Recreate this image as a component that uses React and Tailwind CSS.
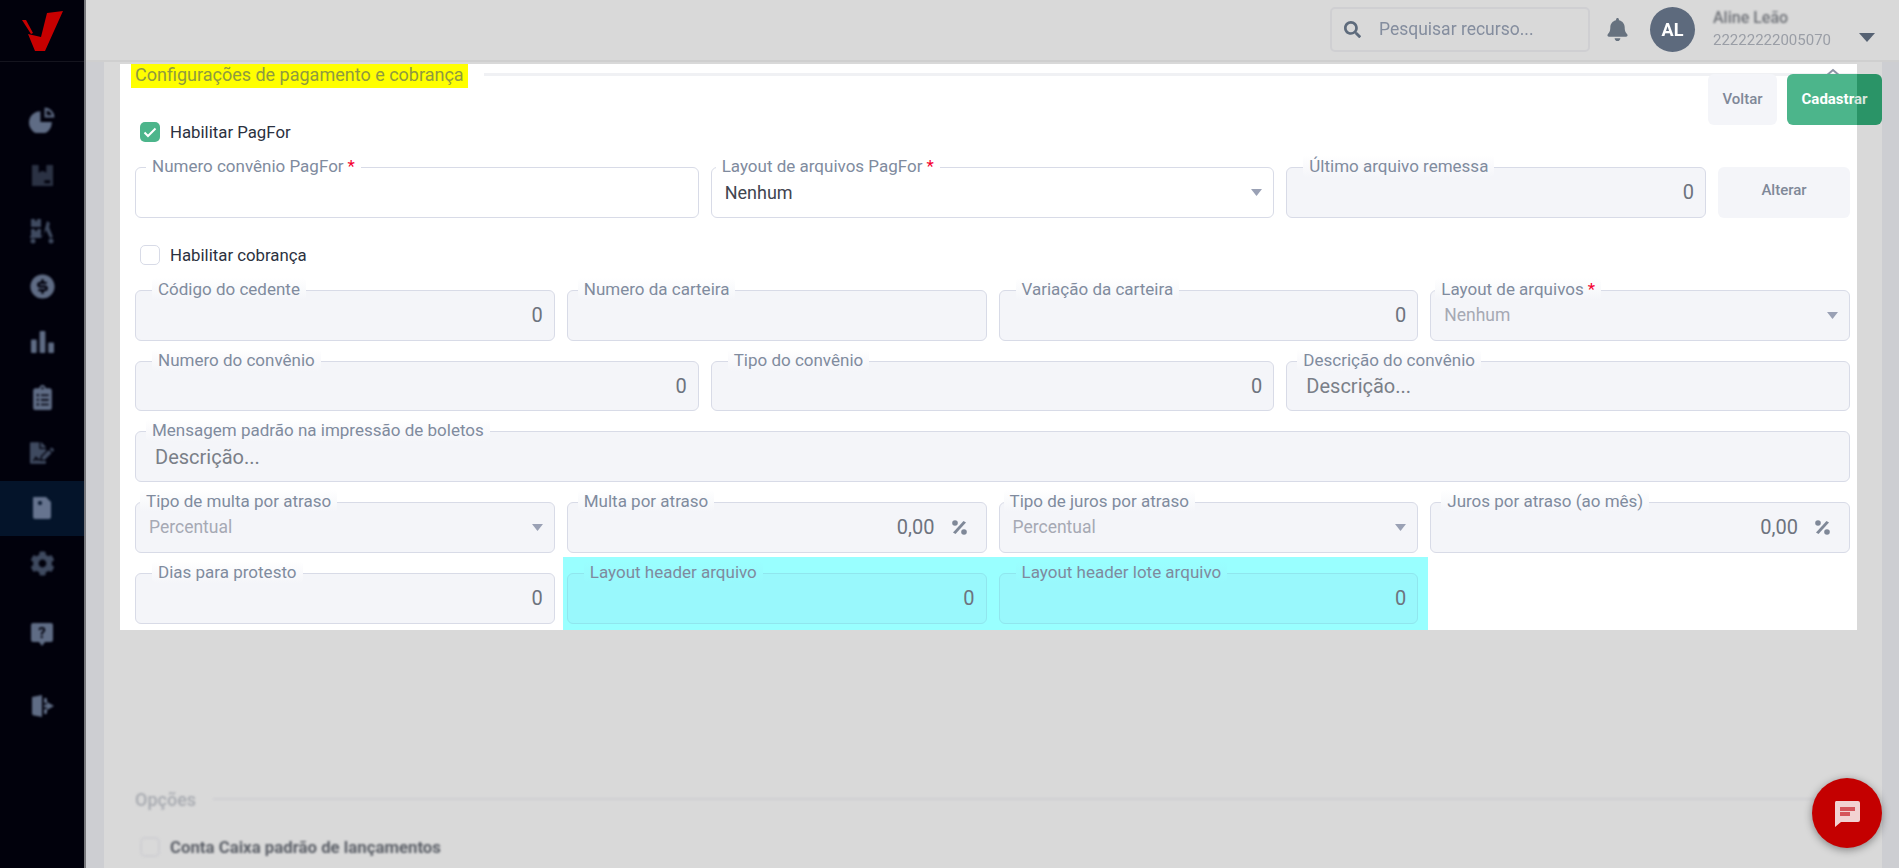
import { FaBell, FaClipboardList, FaCog, FaFileSignature, FaSearch } from 'react-icons/fa';
import { RiMoneyDollarCircleFill } from 'react-icons/ri';

function PieIcon({ size }) {
  return (
    <svg width={size} height={size} viewBox="0 0 26 26" fill="currentColor">
      <path d="M11 5v10.500h11A11 11 0 1 1 11 5z" />
      <path d="M15 1.500a9.500 9.500 0 0 1 9.500 9.500H15zM17 4v5h5.200A7.500 7.500 0 0 0 17 4z" fillRule="evenodd" />
    </svg>
  );
}

function BoxIcon({ size }) {
  return (
    <svg width={size} height={size} viewBox="0 0 24 24" fill="currentColor">
      <path d="M1 1h7v8l4-2 4 2V1h7v22H1zM14 17v3h6v-3z" fillRule="evenodd" />
    </svg>
  );
}

function DollyIcon({ size }) {
  return (
    <svg width={size} height={size} viewBox="0 0 26 26" fill="currentColor">
      <path d="M2 1h4v2h2V1h4v8H2zM2 11h4v2h2v-2h4v8H2zM18 3l3 2-1 4 4 10-3 1-4-8-5 8H1v-2l13 0z" />
      <circle cx="4" cy="23" r="2.500" />
      <circle cx="22" cy="23" r="2.500" />
    </svg>
  );
}

function BarsIcon({ size }) {
  return (
    <svg width={size} height={size} viewBox="0 0 24 24" fill="currentColor">
      <rect x="0" y="10" width="6" height="14" rx="1" />
      <rect x="9" y="1" width="6" height="23" rx="1" />
      <rect x="18" y="13" width="6" height="11" rx="1" />
    </svg>
  );
}

function BookIcon({ size }) {
  return (
    <svg width={size} height={size} viewBox="0 0 24 24" fill="currentColor">
      <path d="M4 1h12l5 5v15a2 2 0 0 1-2 2H5a2 2 0 0 1-2-2V2a1 1 0 0 1 1-1zm6 4a2 2 0 1 0 0 4 2 2 0 0 0 0-4z" fillRule="evenodd" />
    </svg>
  );
}

function HelpIcon({ size }) {
  return (
    <svg width={size} height={size} viewBox="0 0 24 24">
      <path d="M3 1h18a2 2 0 0 1 2 2v15a2 2 0 0 1-2 2h-6l-3 4-3-4H3a2 2 0 0 1-2-2V3a2 2 0 0 1 2-2z" fill="currentColor" />
      <text x="12" y="16" textAnchor="middle" fontSize="15" fontWeight="700" fill="#01010c">?</text>
    </svg>
  );
}

function ExitIcon({ size }) {
  return (
    <svg width={size} height={size} viewBox="0 0 24 24" fill="currentColor">
      <path d="M2 3l10-2v22L4 21.500a2 2 0 0 1-2-2zM14 4h2a1 1 0 0 1 1 1v4h-3zM14 15h3v4a1 1 0 0 1-1 1h-2zM17 8l7 4-7 4v-2.500h-3v-3h3z" />
    </svg>
  );
}

function PercentIcon() {
  return (
    <svg width="15" height="15" viewBox="0 0 15 15" fill="currentColor" className="shrink-0">
      <circle cx="3" cy="3" r="2.800" />
      <circle cx="12" cy="12" r="2.800" />
      <polygon points="1,12.500 11.500,1 14,2.500 3.500,14" />
    </svg>
  );
}

const navItems = [
  { icon: PieIcon, color: 'text-[#5f6c85]', size: 27 },
  { icon: BoxIcon, color: 'text-[#2b3244]', size: 23 },
  { icon: DollyIcon, color: 'text-[#3f4a60]', size: 26 },
  { icon: RiMoneyDollarCircleFill, color: 'text-[#5f6c85]', size: 29 },
  { icon: BarsIcon, color: 'text-[#5f6c85]', size: 23 },
  { icon: FaClipboardList, color: 'text-[#5f6c85]', size: 25 },
  { icon: FaFileSignature, color: 'text-[#3f4a60]', size: 24 },
  { icon: BookIcon, color: 'text-[#66748f]', size: 24, active: true },
  { icon: FaCog, color: 'text-[#3f4a60]', size: 25 },
];

function NavItem({ item, className = '' }) {
  const Icon = item.icon;
  return (
    <div className={`h-[55.5px] flex items-center justify-center ${item.active ? 'bg-[#04142a]' : ''} ${className}`}>
      <div className={`blur-[0.8px] ${item.color}`}>
        <Icon size={item.size} />
      </div>
    </div>
  );
}

function Sidebar() {
  return (
    <aside className="w-[86px] shrink-0 h-full bg-[#01010c] border-r-2 border-[#77787c] flex flex-col">
      <div className="h-[62px] shrink-0 border-b border-[#14141e] flex items-center pl-[22px]">
        <svg width="42" height="42" viewBox="0 0 42 42" className="blur-[0.5px]">
          <polygon points="0,10 4,10 11,23 9,24" fill="#c70000" />
          <polygon points="6,24 13,41 23,41 41,1 25,3 19,27" fill="#c70000" />
        </svg>
      </div>
      <nav className="flex flex-col pt-[30px]">
        {navItems.map((item, i) => (
          <NavItem key={i} item={item} />
        ))}
        <NavItem className="mt-[15px]" item={{ icon: HelpIcon, color: 'text-[#5f6c85]', size: 24 }} />
        <NavItem className="mt-[16px]" item={{ icon: ExitIcon, color: 'text-[#5f6c85]', size: 24 }} />
      </nav>
    </aside>
  );
}

function Header() {
  return (
    <header className="h-[62px] shrink-0 bg-[#d9d9d9] border-b-2 border-[#cfcfcf] flex items-center justify-end pb-[2px] blur-[0.4px]">
      <div className="w-[260px] h-[45px] rounded-[5px] border-2 border-[#cfcfd2] flex items-center pl-[12px] gap-[18px]">
        <FaSearch size={17} className="text-[#5e6b7c]" />
        <span className="text-[17.500px] text-[#848d9e]">Pesquisar recurso...</span>
      </div>
      <FaBell size={23} className="ml-[16px] text-[#67727f]" />
      <div className="ml-[21px] w-[45px] h-[45px] rounded-full bg-[#5d6a7d] text-white font-bold text-[18px] flex items-center justify-center">AL</div>
      <div className="ml-[18px] w-[118px] flex flex-col">
        <span className="text-[16px] leading-[20px] font-medium text-[#6f7278] blur-[1.2px]">Aline Leão</span>
        <span className="text-[15px] leading-[20px] mt-[2px] whitespace-nowrap text-[#9a9ea6]">22222222005070</span>
      </div>
      <svg width="16" height="9" viewBox="0 0 16 9" className="ml-[28px] mr-[24px] mt-[16px]">
        <polygon points="0,0 16,0 8,9" fill="#566273" />
      </svg>
    </header>
  );
}

function Caret({ color = '#9aa1b5' }) {
  return (
    <svg width="11" height="7" viewBox="0 0 11 7" className="shrink-0">
      <polygon points="0,0 11,0 5.500,7" fill={color} />
    </svg>
  );
}

// campo com legenda sobre a borda
function Field({ label, left, span, value, placeholder, select, percent, required, enabled, dim, cyan }) {
  const box = enabled ? 'bg-white border-[#d8dbe7]' : cyan ? 'bg-[#99f8fc] border-[#90e6ee]' : 'bg-[#f4f5f9] border-[#d8dbe7]';
  const legend = enabled
    ? 'bg-white'
    : cyan
      ? 'bg-gradient-to-b from-[#99ffff] to-[#99f8fc]'
      : 'bg-gradient-to-b from-white to-[#f4f5f9]';

  return (
    <div className={`relative h-[50.75px] rounded-[6px] border flex items-center ${box} ${span || ''}`}>
      <span style={{ left }} className={`absolute -top-[13px] h-[22px] px-[6px] rounded-[4px] whitespace-nowrap text-[17px] leading-[22px] ${cyan ? 'text-[#7f8a9e]' : 'text-[#808b9e]'} ${legend}`}>
        {label}
        {required && <span className="text-[#f5002e] ml-[4px]">*</span>}
      </span>
      {select && (
        <div className="w-full flex items-center justify-between pl-[13px] pr-[11px]">
          <span className={`${dim ? 'text-[17.500px] text-[#a6a9b4]' : 'text-[18px] text-[#41454f]'}`}>{value}</span>
          <Caret />
        </div>
      )}
      {placeholder && <span className="pl-[19px] text-[20px] text-[#7a7f88]">{placeholder}</span>}
      {!select && !placeholder && value && (
        <div className="w-full flex items-center justify-end pr-[11px] text-[20px] text-[#6d737e]">
          <span>{value}</span>
          {percent && <span className="ml-[17px] mr-[8px] text-[#7f8898]"><PercentIcon /></span>}
        </div>
      )}
    </div>
  );
}

function CheckRow({ checked, children, className = '' }) {
  return (
    <div className={`h-[20px] ml-[5px] flex items-center gap-[10px] ${className}`}>
      <span className={`w-[20px] h-[20px] rounded-[5px] flex items-center justify-center ${checked ? 'bg-[#4cb58b]' : 'bg-white border border-[#d8dbe7]'}`}>
        {checked && (
          <svg width="14" height="11" viewBox="0 0 14 11" fill="none" stroke="white" strokeWidth="2">
            <polyline points="1.500,5.500 5,9 12.500,1.500" />
          </svg>
        )}
      </span>
      <span className="text-[16.800px] text-[#2b3140] pt-[1px]">{children}</span>
    </div>
  );
}

function Panel() {
  return (
    <section className="relative bg-white pl-[15px] pr-[7px] pb-[6px]">
      <div className="h-[24px] -ml-[4px] -mr-[7px] flex items-start">
        <h2 className="h-[24px] px-[4px] bg-[#ffff00] text-[#8f9a3f] text-[18px] leading-[22px] whitespace-nowrap">Configurações de pagamento e cobrança</h2>
        <div className="flex-1 ml-[16px] mt-[9px] h-[3px] bg-[#f0f1f4]" />
      </div>

      {/* botoes sobre o painel, passam da borda direita */}
      <svg width="18" height="8" viewBox="0 0 18 8" fill="none" stroke="#8b93a5" strokeWidth="2" className="absolute right-[15px] top-[4px]">
        <polyline points="2,8 9,2 16,8" />
      </svg>
      <div className="absolute -right-[25px] top-[10px] flex gap-[10px]">
        <button type="button" className="w-[69px] h-[51px] rounded-[6px] bg-[#f4f5f9] text-[15px] font-medium text-[#7f8898]">Voltar</button>
        <button type="button" className="w-[95px] h-[51px] rounded-[6px] bg-[linear-gradient(to_right,#4cb58b_70px,#2a9467_70px)] text-[15px] font-bold text-white">
          Cadastr<span className="text-[#d5e6de]">ar</span>
        </button>
      </div>

      <CheckRow checked className="mt-[34px]">Habilitar PagFor</CheckRow>

      <div className="mt-[25px] grid grid-cols-12 gap-x-[12px]">
        <Field enabled span="col-span-4" left={10} label="Numero convênio PagFor" required />
        <Field enabled select span="col-span-4" left={4} label="Layout de arquivos PagFor" required value="Nenhum" />
        <Field span="col-span-3" left={16} label="Último arquivo remessa" value="0" />
        <button type="button" className="col-span-1 h-[50.75px] rounded-[6px] bg-[#f4f5f9] text-[15px] font-medium text-[#7f8898] pb-[5px]">Alterar</button>
      </div>

      <CheckRow className="mt-[27px]">Habilitar cobrança</CheckRow>

      <div className="mt-[25px] grid grid-cols-12 gap-x-[12px] gap-y-[20px]">
        <Field span="col-span-3" left={16} label="Código do cedente" value="0" />
        <Field span="col-span-3" left={10} label="Numero da carteira" />
        <Field span="col-span-3" left={16} label="Variação da carteira" value="0" />
        <Field select dim span="col-span-3" left={4} label="Layout de arquivos" required value="Nenhum" />

        <Field span="col-span-4" left={16} label="Numero do convênio" value="0" />
        <Field span="col-span-4" left={16} label="Tipo do convênio" value="0" />
        <Field span="col-span-4" left={10} label="Descrição do convênio" placeholder="Descrição..." />

        <Field span="col-span-12" left={10} label="Mensagem padrão na impressão de boletos" placeholder="Descrição..." />

        <Field select dim span="col-span-3" left={4} label="Tipo de multa por atraso" value="Percentual" />
        <Field percent span="col-span-3" left={10} label="Multa por atraso" value="0,00" />
        <Field select dim span="col-span-3" left={4} label="Tipo de juros por atraso" value="Percentual" />
        <Field percent span="col-span-3" left={10} label="Juros por atraso (ao mês)" value="0,00" />

        <Field span="col-span-3" left={16} label="Dias para protesto" value="0" />
        <div className="col-span-6 -ml-[4px] -mr-[10px] -mt-[16px] -mb-[6px] pt-[16px] pb-[6px] pl-[4px] pr-[10px] bg-[#99ffff] grid grid-cols-2 gap-x-[12px]">
          <Field cyan left={16} label="Layout header arquivo" value="0" />
          <Field cyan left={16} label="Layout header lote arquivo" value="0" />
        </div>
      </div>
    </section>
  );
}

function ChatButton() {
  return (
    <button type="button" className="absolute right-[17px] bottom-[20px] w-[70px] h-[70px] rounded-full bg-[#c40000] shadow-[0_2px_8px_rgba(0,0,0,0.4)] flex items-center justify-center">
      <svg width="28" height="27" viewBox="0 0 28 27" className="blur-[0.3px]">
        <path d="M3 1h22a2 2 0 0 1 2 2v17a2 2 0 0 1-2 2H8l-6 5V3a2 2 0 0 1 1-2z" fill="#f2d2d2" />
        <path d="M7 7h15v4H7zM7 12h10v4H7z" fill="#d5545a" />
      </svg>
    </button>
  );
}

export default function App() {
  return (
    <div className="relative w-[1899px] h-[868px] overflow-hidden flex font-['Roboto',sans-serif] bg-[#d9d9d9]">
      <Sidebar />
      <div className="flex-1 min-w-0 flex flex-col">
        <Header />
        <div className="flex-1 min-h-0 flex">
          <div className="w-[18px] shrink-0 bg-[#cdced2]" />
          <main className="flex-1 min-w-0 pt-[2px] pl-[16px] pr-[25px]">
            <Panel />
            <div className="mt-[156px] pl-[15px] blur-[0.8px]">
              <div className="flex items-center gap-[17px]">
                <span className="text-[18px] font-medium text-[#a7aab0]">Opções</span>
                <div className="flex-1 h-[2px] bg-[#cfcfd3]" />
              </div>
              <div className="mt-[22px] ml-[5px] flex items-center gap-[10px]">
                <span className="w-[20px] h-[20px] rounded-[5px] border-2 border-[#cfcfd3]" />
                <span className="text-[16.800px] font-bold text-[#5c6068]">Conta Caixa padrão de lançamentos</span>
              </div>
            </div>
          </main>
          <div className="w-[17px] shrink-0 bg-[#cdced2]" />
        </div>
      </div>
      <ChatButton />
    </div>
  );
}
